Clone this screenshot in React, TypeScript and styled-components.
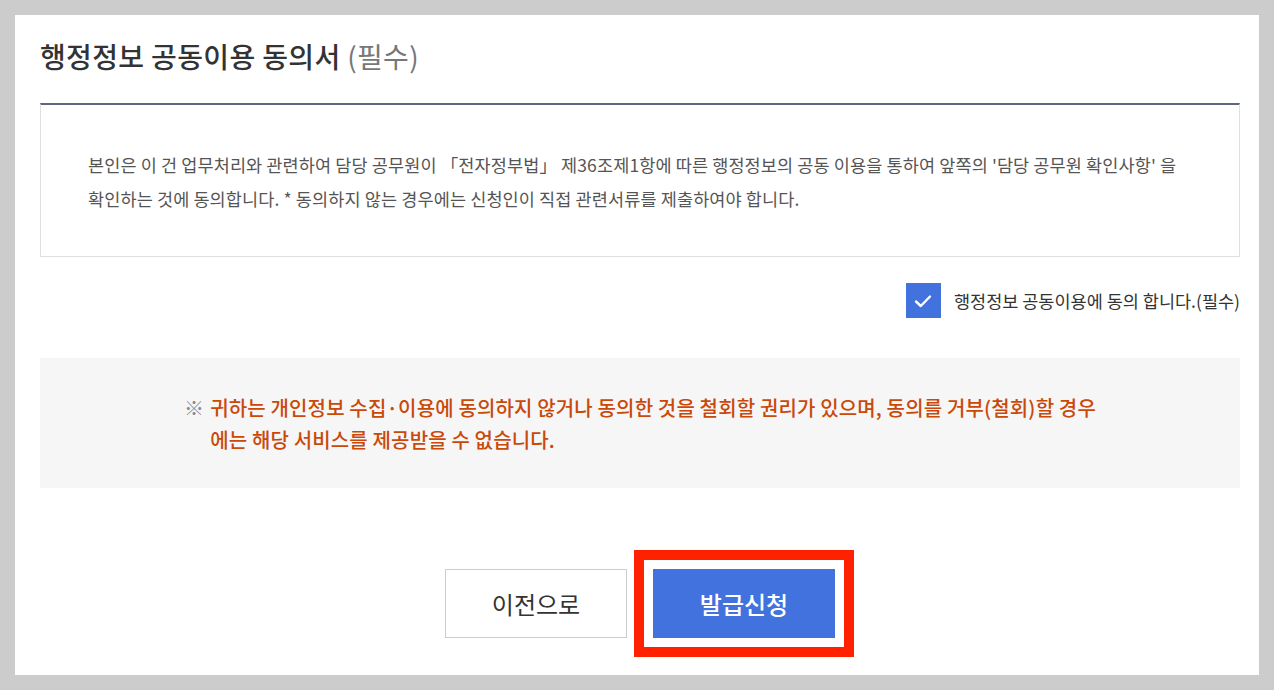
import React from "react";
import styled, { createGlobalStyle } from "styled-components";

const Global = createGlobalStyle`
  html, body { margin: 0; padding: 0; background: #cccccc; }
  body { font-family: "Noto Sans CJK KR", "Noto Sans", sans-serif; }
  * { box-sizing: border-box; }
`;

const Page = styled.div`
  padding: 15px;
  width: 1274px;
  height: 690px;
`;

const Panel = styled.div`
  width: 1244px;
  height: 660px;
  background: #ffffff;
  padding: 22px 19px 0 25px;
  display: flex;
  flex-direction: column;
`;

const Title = styled.h2`
  margin: 0 0 28px;
  font-size: 28px;
  line-height: 38px;
  font-weight: 500;
  color: #333333;
  letter-spacing: 0.35px;
`;

const Sub = styled.span`
  color: #777777;
  font-weight: 400;
`;

const TermsBox = styled.div`
  border: 1px solid #e0e0e0;
  border-top: 2px solid #5d6585;
  padding: 43px 30px 40px 47px;
  height: 154px;
  font-size: 17.5px;
  line-height: 34px;
  color: #555555;
  letter-spacing: 0.12px;
  white-space: nowrap;
`;

const AgreeRow = styled.label`
  margin-top: 26px;
  display: flex;
  justify-content: flex-end;
  align-items: center;
  gap: 13px;
  font-size: 17.5px;
  color: #333333;
`;

const CheckBox = styled.span`
  width: 35px;
  height: 35px;
  background: #4272de;
  display: flex;
  align-items: center;
  justify-content: center;
`;

const Notice = styled.div`
  margin-top: 40px;
  background: #f6f6f6;
  height: 130px;
  padding-top: 34px;
  display: flex;
  justify-content: center;
  align-items: flex-start;
`;

const NoticeInner = styled.div`
  display: flex;
  gap: 6px;
  font-size: 20px;
  line-height: 32px;
  font-weight: 500;
  letter-spacing: 0.15px;
  white-space: nowrap;
`;

const Mark = styled.span`
  color: #8a8a8a;
  font-weight: 400;
`;

const NoticeText = styled.p`
  margin: 0;
  color: #c9490a;
`;

const Buttons = styled.div`
  margin-top: 81px;
  display: flex;
  justify-content: center;
  gap: 26px;
`;

const Button = styled.button<{ $primary?: boolean }>`
  width: 182px;
  height: 69px;
  font-family: "Noto Sans CJK KR", "Noto Sans", sans-serif;
  font-size: 24px;
  font-weight: ${(p) => (p.$primary ? 500 : 400)};
  border: 1px solid ${(p) => (p.$primary ? "#4272de" : "#cccccc")};
  background: ${(p) => (p.$primary ? "#4272de" : "#ffffff")};
  color: ${(p) => (p.$primary ? "#ffffff" : "#333333")};
  outline: ${(p) => (p.$primary ? "10px solid #ff2200" : "none")};
  outline-offset: 9px;
  cursor: pointer;
`;

export default function App() {
  return (
    <>
      <Global />
      <Page>
        <Panel>
          <Title>
            행정정보 공동이용 동의서 <Sub>(필수)</Sub>
          </Title>
          <TermsBox>
            본인은 이 건 업무처리와 관련하여 담당 공무원이 「전자정부법」 제36조제1항에 따른 행정정보의 공동 이용을 통하여 앞쪽의 '담당 공무원 확인사항' 을
            <br />
            확인하는 것에 동의합니다. * 동의하지 않는 경우에는 신청인이 직접 관련서류를 제출하여야 합니다.
          </TermsBox>
          <AgreeRow>
            <CheckBox>
              <svg width="18" height="14" viewBox="0 0 18 14" fill="none">
                <path d="M2 7.5 L6.8 12 L16 2.5" stroke="#ffffff" strokeWidth="2.4" strokeLinecap="round" strokeLinejoin="round" />
              </svg>
            </CheckBox>
            행정정보 공동이용에 동의 합니다.(필수)
          </AgreeRow>
          <Notice>
            <NoticeInner>
              <Mark>※</Mark>
              <NoticeText>
                귀하는 개인정보 수집·이용에 동의하지 않거나 동의한 것을 철회할 권리가 있으며, 동의를 거부(철회)할 경우
                <br />
                에는 해당 서비스를 제공받을 수 없습니다.
              </NoticeText>
            </NoticeInner>
          </Notice>
          <Buttons>
            <Button>이전으로</Button>
            <Button $primary>발급신청</Button>
          </Buttons>
        </Panel>
      </Page>
    </>
  );
}
